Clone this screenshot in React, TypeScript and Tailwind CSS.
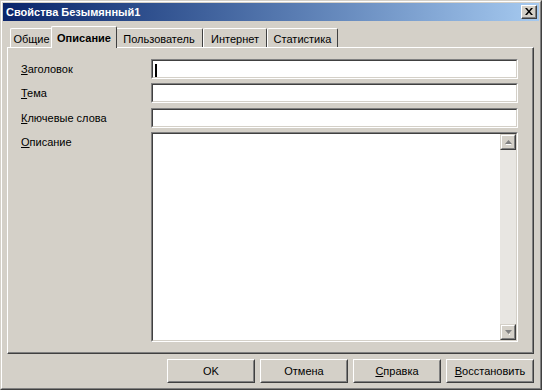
import type { ReactNode } from 'react';

const FONT = { fontFamily: '"Liberation Sans", Tahoma, sans-serif' };

const TABS = [
  { label: 'Общие', w: 'w-[43px]' },
  { label: 'Описание', w: 'w-[62px]', active: true },
  { label: 'Пользователь', w: 'w-[88px]' },
  { label: 'Интернет', w: 'w-[64px]' },
  { label: 'Статистика', w: 'w-[71px]' },
];

function Sunken({ className, children }: { className: string; children?: ReactNode }) {
  return (
    <div className={`shrink-0 border border-t-[#808080] border-l-[#808080] border-b-white border-r-white ${className}`}>
      <div className="h-full w-full border border-t-[#404040] border-l-[#404040] border-b-[#d4d0c8] border-r-[#d4d0c8] bg-white">
        {children}
      </div>
    </div>
  );
}

function Btn({ children }: { children: ReactNode }) {
  return (
    <button className="h-[24px] w-[88px] border border-t-white border-l-white border-b-[#404040] border-r-[#404040] bg-[#d4d0c8] p-0">
      <div className="flex h-full w-full items-center justify-center border border-t-[#d4d0c8] border-l-[#d4d0c8] border-b-[#808080] border-r-[#808080] text-[11px] text-black">
        {children}
      </div>
    </button>
  );
}

function ScrollArrow({ up }: { up?: boolean }) {
  return (
    <div className="h-[16px] w-[16px] border border-t-[#d4d0c8] border-l-[#d4d0c8] border-b-[#404040] border-r-[#404040]">
      <div className="flex h-full w-full items-center justify-center border border-t-white border-l-white border-b-[#808080] border-r-[#808080] bg-[#d4d0c8]">
        <svg width="7" height="5" viewBox="0 0 7 5">
          {up ? (
            <>
              <path d="M1 4 L6 4 L6 5 L1 5 Z" fill="#ffffff" />
              <path d="M3.5 0 L7 4 L0 4 Z" fill="#808080" />
            </>
          ) : (
            <>
              <path d="M0 0 L7 0 L3.5 4 Z" fill="#808080" />
              <path d="M4 4 L5 4 L5 5 L4 5 Z" fill="#ffffff" />
            </>
          )}
        </svg>
      </div>
    </div>
  );
}

function Label({ acc, rest }: { acc: string; rest: string }) {
  return (
    <span className="block w-[130px] shrink-0 text-[11px] text-black">
      <u>{acc}</u>
      {rest}
    </span>
  );
}

export default function App() {
  return (
    <div style={FONT} className="h-[390px] w-[542px] overflow-hidden border border-t-[#d4d0c8] border-l-[#d4d0c8] border-b-[#404040] border-r-[#404040] bg-[#d4d0c8]">
      <div className="flex h-full w-full flex-col border border-t-white border-l-white border-b-[#808080] border-r-[#808080] p-px">
        {/* title bar */}
        <div className="flex h-[18px] items-center justify-between bg-gradient-to-r from-[#0a246a] to-[#a6caf0] pl-[3px] pr-[2px]">
          <span className="text-[11px] font-bold text-white">Свойства Безымянный1</span>
          <div className="h-[14px] w-[16px] border border-t-white border-l-white border-b-[#404040] border-r-[#404040]">
            <div className="flex h-full w-full items-center justify-center border-b border-r border-b-[#808080] border-r-[#808080] bg-[#d4d0c8]">
              <svg width="8" height="7" viewBox="0 0 8 7">
                <path d="M0 0 L2 0 L4 2.5 L6 0 L8 0 L5 3.5 L8 7 L6 7 L4 4.5 L2 7 L0 7 L3 3.5 Z" fill="#000" />
              </svg>
            </div>
          </div>
        </div>

        {/* tabs */}
        <div className="mt-[5px] flex h-[21px] items-end pl-[7px]">
          {TABS.map((t) =>
            t.active ? (
              <div
                key={t.label}
                className="relative z-10 -mx-[2px] -mb-px flex h-[22px] w-[66px] items-start justify-center rounded-t-[2px] border-l border-r border-t border-l-white border-t-white border-r-[#404040] bg-[#d4d0c8] pt-[3px] text-[11px] font-bold text-black"
              >
                {t.label}
              </div>
            ) : (
              <div
                key={t.label}
                className={`flex h-[19px] ${t.w} items-start justify-center rounded-t-[2px] border-l border-r border-t border-l-white border-t-white border-r-[#404040] pt-[2px] text-[11px] text-black`}
              >
                {t.label}
              </div>
            )
          )}
        </div>

        {/* panel */}
        <div className="ml-[4px] mr-[5px] h-[307px] border border-t-white border-l-white border-b-[#404040] border-r-[#404040]">
          <div className="flex h-full w-full border-b border-r border-b-[#808080] border-r-[#808080]">
            <div className="flex flex-col pl-[13px] pt-[11px]">
              <div className="flex items-center">
                <Label acc="З" rest="аголовок" />
                <Sunken className="h-[20px] w-[367px]">
                  <div className="ml-[2px] mt-[3px] h-[13px] w-[2px] bg-black" />
                </Sunken>
              </div>
              <div className="mt-[4px] flex items-center">
                <Label acc="Т" rest="ема" />
                <Sunken className="h-[20px] w-[367px]" />
              </div>
              <div className="mt-[5px] flex items-center">
                <Label acc="К" rest="лючевые слова" />
                <Sunken className="h-[20px] w-[367px]" />
              </div>
              <div className="mt-[4px] flex items-start">
                <div className="shrink-0 pt-[2px]">
                  <Label acc="О" rest="писание" />
                </div>
                <Sunken className="h-[210px] w-[367px]">
                  <div className="flex h-full justify-end">
                    <div className="flex w-[16px] flex-col justify-between bg-[#e8e6e2]">
                      <ScrollArrow up />
                      <ScrollArrow />
                    </div>
                  </div>
                </Sunken>
              </div>
            </div>
          </div>
        </div>

        {/* buttons */}
        <div className="mt-[5px] flex justify-end gap-[5px] pr-[5px]">
          <Btn>OK</Btn>
          <Btn>Отмена</Btn>
          <Btn>
            <u>С</u>правка
          </Btn>
          <Btn>
            <u>В</u>осстановить
          </Btn>
        </div>
      </div>
    </div>
  );
}
